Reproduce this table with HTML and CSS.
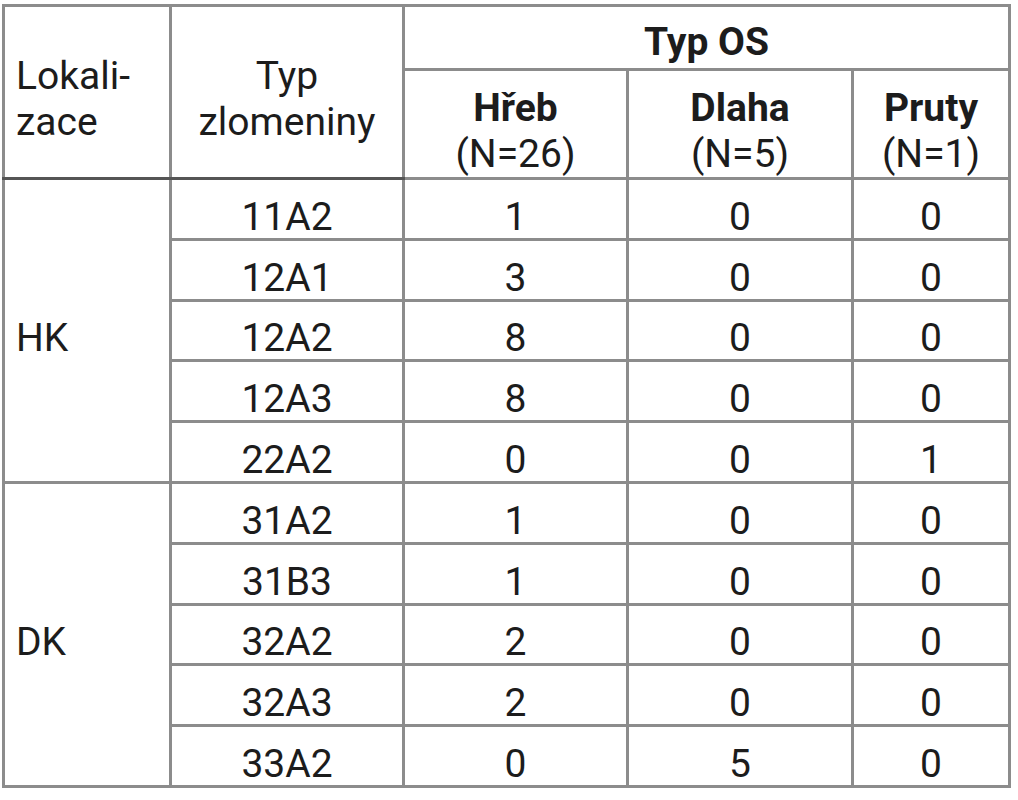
FILE: index.html
```html
<!DOCTYPE html>
<html lang="cs">
<head>
<meta charset="utf-8">
<link rel="stylesheet" href="styles.css">
</head>
<body>
<table class="tbl">
  <colgroup>
    <col class="c-loc"><col class="c-typ"><col class="c-h"><col class="c-d"><col class="c-p">
  </colgroup>
  <thead>
    <tr class="hr1">
      <th rowspan="2" class="left">Lokali-<br>zace</th>
      <th rowspan="2">Typ<br>zlomeniny</th>
      <th colspan="3" class="bold">Typ OS</th>
    </tr>
    <tr class="hr2">
      <th><b>Hřeb</b><br>(N=26)</th>
      <th><b>Dlaha</b><br>(N=5)</th>
      <th><b>Pruty</b><br>(N=1)</th>
    </tr>
  </thead>
  <tbody class="grp">
    <tr><td rowspan="5" class="left">HK</td><td>11A2</td><td>1</td><td>0</td><td>0</td></tr>
    <tr><td>12A1</td><td>3</td><td>0</td><td>0</td></tr>
    <tr><td>12A2</td><td>8</td><td>0</td><td>0</td></tr>
    <tr><td>12A3</td><td>8</td><td>0</td><td>0</td></tr>
    <tr><td>22A2</td><td>0</td><td>0</td><td>1</td></tr>
  </tbody>
  <tbody class="grp">
    <tr><td rowspan="5" class="left">DK</td><td>31A2</td><td>1</td><td>0</td><td>0</td></tr>
    <tr><td>31B3</td><td>1</td><td>0</td><td>0</td></tr>
    <tr><td>32A2</td><td>2</td><td>0</td><td>0</td></tr>
    <tr><td>32A3</td><td>2</td><td>0</td><td>0</td></tr>
    <tr><td>33A2</td><td>0</td><td>5</td><td>0</td></tr>
  </tbody>
</table>
</body>
</html>
```

FILE: styles.css
```css
html, body {
  margin: 0;
  padding: 0;
  background: #ffffff;
}

body {
  font-family: Roboto, "Liberation Sans", sans-serif;
  color: #1c1c1c;
}

.tbl {
  margin: 4px 0 0 2px;
  border-collapse: collapse;
  table-layout: fixed;
  width: 1006px;
  font-size: 39px;
  line-height: 40px;
  border-top: 2px solid #555555;
  border-left: 2px solid #4a4a4a;
  border-right: 2px solid #4a4a4a;
  border-bottom: 3px solid #8a8a8a;
}

.c-loc { width: 167px; }
.c-typ { width: 233px; }
.c-h { width: 224px; }
.c-d { width: 225px; }
.c-p { width: 157px; }

th, td {
  border: 3px solid #8c8c8c;
  padding: 16px 0 0 0;
  text-align: center;
  vertical-align: middle;
  font-weight: 400;
}

thead th {
  line-height: 46px;
  padding-top: 13px;
  border-bottom-color: #555555;
}

th b, .bold {
  font-weight: 700;
}

.left {
  text-align: left;
  padding-left: 11px;
}

.hr1 { height: 64px; }
.hr2 { height: 109px; }

.hr1 th.bold {
  padding-top: 8px;
  border-bottom: 2px solid #555555;
}

.hr2 th {
  border-left: 2px solid #555555;
  border-bottom: 2px solid #555555;
}

.grp tr { height: 60.8px; }

.grp + .grp td {
  border-top: 3px solid #8a8a8a;
}
```
